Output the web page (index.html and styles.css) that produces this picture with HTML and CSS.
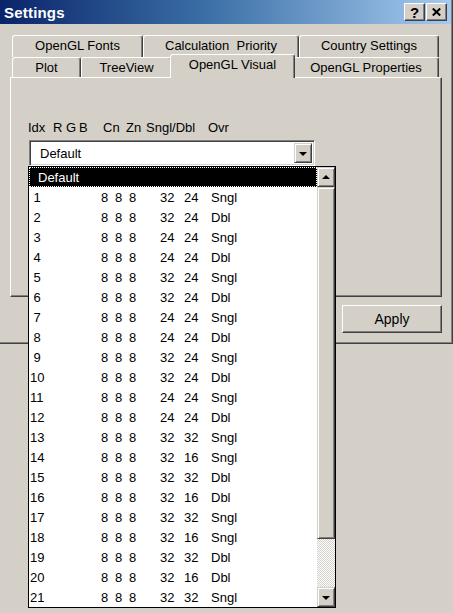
FILE: index.html
```html
<!DOCTYPE html>
<html>
<head>
<meta charset="utf-8">
<link rel="stylesheet" href="styles.css">
</head>
<body>
<div class="window">
  <div class="frame">
    <div class="titlebar">
      <span class="title">Settings</span>
      <div class="tb-buttons">
        <span class="tb-btn help">?</span>
        <span class="tb-btn close"><svg width="9" height="8" viewBox="0 0 9 8"><path d="M0.8 0.5 L8.2 7.5 M8.2 0.5 L0.8 7.5" stroke="#000" stroke-width="2" fill="none"/></svg></span>
      </div>
    </div>
    <div class="content">
      <div class="tabs">
        <div class="tab-row back">
          <div class="tab t-fonts">OpenGL Fonts</div>
          <div class="tab t-calc">Calculation&nbsp; Priority</div>
          <div class="tab t-country">Country Settings</div>
        </div>
        <div class="tab-row front">
          <div class="tab t-plot">Plot</div>
          <div class="tab t-tree">TreeView</div>
          <div class="tab t-visual selected">OpenGL Visual</div>
          <div class="tab t-props">OpenGL Properties</div>
        </div>
      </div>
      <div class="panel">
        <div class="hdr">
          <span>Idx</span><span>R</span><span>G</span><span>B</span><span>Cn</span><span>Zn</span><span>Sngl/Dbl</span><span>Ovr</span>
        </div>
        <div class="combo">
          <span class="combo-text">Default</span>
          <span class="combo-btn"><span class="arrow-down"></span></span>
        </div>
      </div>
      <div class="actions">
        <div class="btn">Apply</div>
      </div>
    </div>
  </div>
</div>

<div class="droplist">
  <div class="items">
    <div class="item sel"><span class="sel-text">Default</span></div>
    <div class="item"><span>&nbsp;1</span><span>8</span><span>8</span><span>8</span><span>32</span><span>24</span><span>Sngl</span></div>
    <div class="item"><span>&nbsp;2</span><span>8</span><span>8</span><span>8</span><span>32</span><span>24</span><span>Dbl</span></div>
    <div class="item"><span>&nbsp;3</span><span>8</span><span>8</span><span>8</span><span>24</span><span>24</span><span>Sngl</span></div>
    <div class="item"><span>&nbsp;4</span><span>8</span><span>8</span><span>8</span><span>24</span><span>24</span><span>Dbl</span></div>
    <div class="item"><span>&nbsp;5</span><span>8</span><span>8</span><span>8</span><span>32</span><span>24</span><span>Sngl</span></div>
    <div class="item"><span>&nbsp;6</span><span>8</span><span>8</span><span>8</span><span>32</span><span>24</span><span>Dbl</span></div>
    <div class="item"><span>&nbsp;7</span><span>8</span><span>8</span><span>8</span><span>24</span><span>24</span><span>Sngl</span></div>
    <div class="item"><span>&nbsp;8</span><span>8</span><span>8</span><span>8</span><span>24</span><span>24</span><span>Dbl</span></div>
    <div class="item"><span>&nbsp;9</span><span>8</span><span>8</span><span>8</span><span>32</span><span>24</span><span>Sngl</span></div>
    <div class="item"><span>10</span><span>8</span><span>8</span><span>8</span><span>32</span><span>24</span><span>Dbl</span></div>
    <div class="item"><span>11</span><span>8</span><span>8</span><span>8</span><span>24</span><span>24</span><span>Sngl</span></div>
    <div class="item"><span>12</span><span>8</span><span>8</span><span>8</span><span>24</span><span>24</span><span>Dbl</span></div>
    <div class="item"><span>13</span><span>8</span><span>8</span><span>8</span><span>32</span><span>32</span><span>Sngl</span></div>
    <div class="item"><span>14</span><span>8</span><span>8</span><span>8</span><span>32</span><span>16</span><span>Sngl</span></div>
    <div class="item"><span>15</span><span>8</span><span>8</span><span>8</span><span>32</span><span>32</span><span>Dbl</span></div>
    <div class="item"><span>16</span><span>8</span><span>8</span><span>8</span><span>32</span><span>16</span><span>Dbl</span></div>
    <div class="item"><span>17</span><span>8</span><span>8</span><span>8</span><span>32</span><span>32</span><span>Sngl</span></div>
    <div class="item"><span>18</span><span>8</span><span>8</span><span>8</span><span>32</span><span>16</span><span>Sngl</span></div>
    <div class="item"><span>19</span><span>8</span><span>8</span><span>8</span><span>32</span><span>32</span><span>Dbl</span></div>
    <div class="item"><span>20</span><span>8</span><span>8</span><span>8</span><span>32</span><span>16</span><span>Dbl</span></div>
    <div class="item"><span>21</span><span>8</span><span>8</span><span>8</span><span>32</span><span>32</span><span>Sngl</span></div>
  </div>
  <div class="scrollbar">
    <div class="sb-btn"><span class="arrow-up"></span></div>
    <div class="sb-thumb"></div>
    <div class="sb-track"></div>
    <div class="sb-btn"><span class="arrow-down"></span></div>
  </div>
</div>
</body>
</html>
```

FILE: styles.css
```css
* { box-sizing: border-box; }
html, body { margin: 0; padding: 0; }
body {
  width: 453px;
  height: 613px;
  overflow: hidden;
  position: relative;
  background: #d4d0c8;
  font-family: "Liberation Sans", Arial, sans-serif;
  font-size: 13px;
  color: #000;
}

.window {
  width: 453px;
  height: 344px;
  border-right: 1px solid #404040;
  border-bottom: 1px solid #404040;
}
.frame {
  height: 100%;
  border-right: 1px solid #808080;
  border-bottom: 1px solid #808080;
}

.titlebar {
  height: 24px;
  display: flex;
  align-items: center;
  justify-content: space-between;
  padding: 0 4px 0 4px;
  background: linear-gradient(to right, #0a246a 0%, #3a6ea5 45%, #a6caf0 100%);
}
.title {
  color: #fff;
  font-weight: bold;
  font-size: 15px;
  letter-spacing: 0.2px;
}
.tb-buttons { display: flex; gap: 1px; }
.tb-btn {
  width: 21px;
  height: 18px;
  display: flex;
  align-items: center;
  justify-content: center;
  background: #d4d0c8;
  border: 1px solid;
  border-color: #fff #404040 #404040 #fff;
  box-shadow: inset -1px -1px #808080;
  font-weight: bold;
  font-size: 15px;
  line-height: 1;
}

.content { padding-top: 11px; }

.tabs { padding-left: 12px; }
.tab-row { display: flex; }
.tab-row.back { height: 22px; }
.tab-row.front { height: 20px; position: relative; z-index: 2; }
.tab {
  background: #d4d0c8;
  border: 1px solid;
  border-bottom: 0;
  border-color: #fff #404040 transparent #fff;
  border-radius: 3px 3px 0 0;
  box-shadow: inset -1px 0 #808080;
  text-align: center;
  white-space: nowrap;
}
.back .tab { height: 22px; line-height: 20px; }
.front .tab { height: 20px; line-height: 19px; }
.t-fonts { width: 131px; }
.t-calc { width: 156px; }
.t-country { width: 140px; }
.t-plot { width: 69px; }
.t-tree { width: 91px; }
.t-props { width: 146px; }
.front .tab.selected {
  width: 125px;
  height: 24px;
  margin: -3px -2px 0 -2px;
  line-height: 19px;
  position: relative;
  z-index: 3;
}

.panel {
  margin-left: 10px;
  width: 432px;
  height: 220px;
  border: 1px solid;
  border-color: #fff #404040 #404040 #fff;
  box-shadow: inset -1px -1px #808080;
  padding: 42px 0 0 17px;
}
.hdr {
  display: grid;
  grid-template-columns: 25px 13px 13px 24px 23px 20px 62px auto;
  height: 15px;
  line-height: 15px;
}
.combo {
  margin-top: 5px;
  margin-left: 1px;
  width: 286px;
  height: 26px;
  display: flex;
  align-items: stretch;
  background: #fff;
  border: 1px solid;
  border-color: #808080 #fff #fff #808080;
  box-shadow: inset 1px 1px #404040, inset -1px -1px #d4d0c8;
  padding: 2px;
}
.combo-text {
  flex: 1;
  padding-left: 8px;
  line-height: 22px;
}
.combo-btn {
  width: 18px;
  background: #d4d0c8;
  border: 1px solid;
  border-color: #d4d0c8 #404040 #404040 #d4d0c8;
  box-shadow: inset 1px 1px #fff, inset -1px -1px #808080;
  display: flex;
  align-items: center;
  justify-content: center;
}
.arrow-down {
  width: 0; height: 0;
  border-left: 4px solid transparent;
  border-right: 4px solid transparent;
  border-top: 4px solid #000;
  margin-top: 1px;
}
.arrow-up {
  width: 0; height: 0;
  border-left: 4px solid transparent;
  border-right: 4px solid transparent;
  border-bottom: 4px solid #000;
}

.actions {
  display: flex;
  justify-content: flex-end;
  padding-right: 9px;
  margin-top: 8px;
}
.btn {
  width: 100px;
  height: 28px;
  border: 1px solid;
  border-color: #fff #404040 #404040 #fff;
  box-shadow: inset -1px -1px #808080;
  text-align: center;
  line-height: 26px;
  font-size: 14px;
}

.droplist {
  position: absolute;
  left: 28px;
  top: 166px;
  width: 308px;
  height: 442px;
  border: 1px solid #000;
  background: #fff;
  display: flex;
  z-index: 10;
}
.items { flex: 1; }
.item {
  height: 20px;
  line-height: 22px;
  display: grid;
  grid-template-columns: 71px 14px 14px 31px 24px 27px 1fr;
  padding-left: 1px;
  white-space: nowrap;
}
.item.sel {
  display: block;
  background: #000;
  color: #fff;
  border: 1px dotted #fff;
  line-height: 20px;
  padding-left: 8px;
}
.scrollbar {
  width: 18px;
  display: flex;
  flex-direction: column;
}
.sb-btn, .sb-thumb {
  background: #d4d0c8;
  border: 1px solid;
  border-color: #d4d0c8 #404040 #404040 #d4d0c8;
  box-shadow: inset 1px 1px #fff, inset -1px -1px #808080;
}
.sb-btn {
  height: 20px;
  display: flex;
  align-items: center;
  justify-content: center;
}
.sb-thumb { height: 352px; }
.sb-track {
  flex: 1;
  background: repeating-conic-gradient(#fff 0 25%, #d4d0c8 0 50%) 0 0 / 2px 2px;
}
```
